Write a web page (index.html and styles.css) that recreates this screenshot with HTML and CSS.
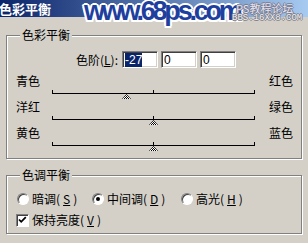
FILE: index.html
```html
<!DOCTYPE html>
<html lang="zh-CN">
<head>
<meta charset="UTF-8" />
<title>色彩平衡</title>
<link rel="stylesheet" href="styles.css">
</head>
<body>

<svg class="defs" width="0" height="0" aria-hidden="true">
  <defs>
    <pattern id="dither" width="2" height="2" patternUnits="userSpaceOnUse">
      <rect width="2" height="2" fill="#fff"/>
      <rect width="1" height="1" fill="#000"/>
      <rect x="1" y="1" width="1" height="1" fill="#000"/>
    </pattern>
  </defs>
</svg>

<div class="titlebar"><span class="title">色彩平衡</span></div>

<span class="wm-site">www.68ps.com</span>
<span class="wm-forum">PS教程论坛</span>
<span class="wm-bbs">BBS.16XX8.COM</span>

<div class="dialog">
  <div class="group group-color">
    <span class="legend">色彩平衡</span>
    <div class="levels">
      <span class="levels-label">色阶(<u>L</u>):</span>
      <span class="field"><span class="sel">-27</span></span>
      <span class="field">0</span>
      <span class="field">0</span>
    </div>

    <div class="sliders">
      <div class="slider-row">
        <span class="cap-left">青色</span>
        <div class="track">
          <div class="track-line"></div>
          <span class="track-mid"></span>
          <svg class="thumb" style="left:74px" width="9" height="5"><polygon points="4.5,0 9,5 0,5" fill="url(#dither)"/></svg>
        </div>
        <span class="cap-right">红色</span>
      </div>
      <div class="slider-row">
        <span class="cap-left">洋红</span>
        <div class="track">
          <div class="track-line"></div>
          <span class="track-mid"></span>
          <svg class="thumb" style="left:101px" width="9" height="5"><polygon points="4.5,0 9,5 0,5" fill="url(#dither)"/></svg>
        </div>
        <span class="cap-right">绿色</span>
      </div>
      <div class="slider-row">
        <span class="cap-left">黄色</span>
        <div class="track">
          <div class="track-line"></div>
          <span class="track-mid"></span>
          <svg class="thumb" style="left:101px" width="9" height="5"><polygon points="4.5,0 9,5 0,5" fill="url(#dither)"/></svg>
        </div>
        <span class="cap-right">蓝色</span>
      </div>
    </div>
  </div>

  <div class="group group-tone">
    <span class="legend">色调平衡</span>
    <div class="tone-options">
      <label class="option"><span class="radio"></span>暗调(<u>S</u>)</label>
      <label class="option"><span class="radio checked"></span>中间调(<u>D</u>)</label>
      <label class="option"><span class="radio"></span>高光(<u>H</u>)</label>
    </div>
    <label class="keep">
      <span class="checkbox"><svg width="11" height="11" viewBox="0 0 11 11"><path d="M2 4.5 L4.2 6.8 L8.8 2.2" stroke="#000" stroke-width="1.8" fill="none"/></svg></span>
      保持亮度(<u>V</u>)
    </label>
  </div>
</div>

</body>
</html>
```

FILE: styles.css
```css
/* Reset */
*, *::before, *::after {
  margin: 0; padding: 0; box-sizing: border-box;
}
html, body {
  width: 308px;
  height: 243px;
  overflow: hidden;
}
body {
  position: relative;
  background: #d4d0c8;
  color: #000;
  font-family: "Noto Sans CJK SC", "Liberation Sans", sans-serif;
  font-size: 12px;
  line-height: 14px;
}

.defs {
  position: absolute;
}

.titlebar {
  height: 17px;
  background: linear-gradient(to right, #0a246a, #a6caf0);
}
.title {
  display: block;
  margin-left: -1px;
  color: #fff;
  font-weight: bold;
  font-size: 13px;
  line-height: 17px;
}

/* watermark over the title bar */
.wm-site {
  position: absolute;
  left: 84px;
  top: -2px;
  font-family: "Liberation Sans", Arial, sans-serif;
  font-weight: bold;
  font-size: 27px;
  line-height: 27px;
  letter-spacing: -3.2px;
  color: #1f3f9f;
  text-shadow: 2px 0 #fff, -2px 0 #fff, 0 2px #fff, 0 -2px #fff,
    1.5px 1.5px #fff, -1.5px -1.5px #fff, 1.5px -1.5px #fff, -1.5px 1.5px #fff;
}
.wm-forum {
  position: absolute;
  left: 236px;
  top: 2px;
  font-size: 11px;
  line-height: 13px;
  color: #e4e4ee;
  text-shadow: 1px 0 #7a7a90, -1px 0 #7a7a90, 0 1px #7a7a90, 0 -1px #7a7a90;
}
.wm-bbs {
  position: absolute;
  left: 232px;
  top: 14px;
  font-family: "Liberation Mono", monospace;
  font-size: 9px;
  line-height: 9px;
  color: #eeeef2;
  text-shadow: 1px 0 #808088, -1px 0 #808088, 0 1px #808088, 0 -1px #808088;
}

.dialog {
  padding: 18px 6px 0;
}

.group {
  position: relative;
  border: 1px solid #808080;
  box-shadow: inset 1px 1px 0 #fff, 1px 1px 0 #fff;
}
.group-color {
  height: 124px;
}
.group-tone {
  height: 59px;
  margin-top: 16px;
}
.legend {
  position: absolute;
  top: -8px;
  left: 13px;
  padding: 0 2px;
  background: #d4d0c8;
}

.levels {
  display: flex;
  align-items: center;
  margin-top: 15px;
}
.levels-label {
  width: 111px;
  margin-right: 4px;
  text-align: right;
}
.field {
  width: 36px;
  height: 17px;
  padding: 2px 0 0 2px;
  background: #fff;
  border: 1px solid;
  border-color: #808080 #fff #fff #808080;
  box-shadow: inset 1px 1px 0 #404040, inset -1px -1px 0 #d4d0c8;
  font-family: "Liberation Sans", sans-serif;
  line-height: 12px;
}
.field + .field {
  margin-left: 3px;
}
.sel {
  background: #0a246a;
  color: #fff;
}

.sliders {
  margin-top: 6px;
}
.slider-row {
  display: grid;
  grid-template-columns: 45px 203px 1fr;
  height: 26px;
}
.cap-left {
  padding-left: 9px;
}
.cap-right {
  padding-left: 14px;
}
.track {
  position: relative;
}
.track-line {
  margin-top: 16px;
  height: 4px;
  border: 1px solid #000;
  border-top: 0;
}
.track-mid {
  position: absolute;
  left: 101px;
  top: 16px;
  width: 1px;
  height: 3px;
  background: #000;
}
.thumb {
  position: absolute;
  top: 20px;
  margin-left: -4px;
}

.tone-options {
  display: grid;
  grid-template-columns: 75px 89px 1fr;
  margin-top: 16px;
  padding-left: 10px;
}
.option, .keep {
  display: flex;
  align-items: center;
  gap: 3px;
}
.radio {
  display: flex;
  align-items: center;
  justify-content: center;
  width: 12px;
  height: 12px;
  border-radius: 50%;
  background: #fff;
  border: 1px solid;
  border-color: #808080 #fff #fff #808080;
  box-shadow: inset 1px 1px 0 #404040;
}
.radio.checked::after {
  content: "";
  width: 4px;
  height: 4px;
  border-radius: 50%;
  background: #000;
}
.keep {
  margin-top: 7px;
  padding-left: 9px;
}
.checkbox {
  display: flex;
  width: 13px;
  height: 13px;
  background: #fff;
  border: 1px solid;
  border-color: #808080 #fff #fff #808080;
  box-shadow: inset 1px 1px 0 #404040;
}
```
